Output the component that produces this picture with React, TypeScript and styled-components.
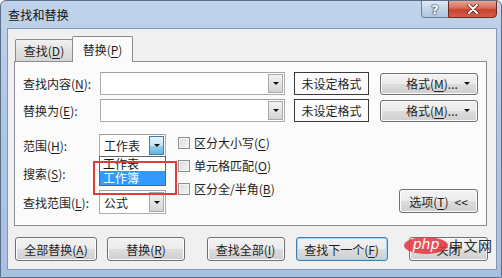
import React from 'react';
import styled, { createGlobalStyle, css } from 'styled-components';

const GlobalStyle = createGlobalStyle`
  html, body {
    margin: 0;
    padding: 0;
    background: #fff;
  }
  body {
    font-family: "Noto Sans CJK SC", "Noto Sans", sans-serif;
    font-size: 12px;
    color: #1e1e1e;
  }
`;

const Window = styled.div`
  position: relative;
  width: 502px;
  height: 278px;
  display: flex;
  flex-direction: column;
  box-sizing: border-box;
  background: linear-gradient(180deg, #c0d3ea 0%, #b0c7e3 40%, #a9c1e0 100%);
  border: 1px solid #5b6f8c;
  border-radius: 6px 6px 0 0;
  overflow: hidden;
`;

const TitleBar = styled.div`
  height: 27px;
  display: flex;
  align-items: flex-start;
  justify-content: space-between;
  flex-shrink: 0;
`;

const Title = styled.div`
  margin: 5px 0 0 7px;
  font-size: 12px;
  color: #111;
  letter-spacing: 0.2px;
`;

const Caption = styled.div`
  display: flex;
  margin-right: 4px;
  margin-top: -1px;
`;

const HelpButton = styled.div`
  width: 27px;
  height: 18px;
  box-sizing: border-box;
  border: 1px solid #6b7f9c;
  border-right: none;
  border-radius: 0 0 0 4px;
  background: linear-gradient(180deg, #dfe9f5 0%, #c3d4e9 50%, #afc4df 100%);
  display: flex;
  align-items: center;
  justify-content: center;
  color: #fff;
  font-family: "DejaVu Sans", sans-serif;
  font-weight: bold;
  font-size: 13px;
  text-shadow: 0 0 1px #2a3a55, 0 0 1px #2a3a55, 0 0 2px #2a3a55;
`;

const CloseButton = styled.div`
  width: 49px;
  height: 18px;
  box-sizing: border-box;
  border: 1px solid #6e2a22;
  border-radius: 0 0 4px 0;
  background: linear-gradient(180deg, #e6a594 0%, #d86a55 45%, #c7432e 55%, #d0604a 100%);
  display: flex;
  align-items: center;
  justify-content: center;
`;

const Client = styled.div`
  flex: 1;
  margin: 0 4px 7px 6px;
  background: #f0f0f0;
  border: 1px solid #8397b4;
  display: flex;
  flex-direction: column;
  padding: 7px 8px 8px 6px;
`;

const TabStrip = styled.div`
  display: flex;
  align-items: flex-end;
  padding-left: 1px;
  position: relative;
  z-index: 2;
`;

const Tab = styled.div<{ active?: boolean }>`
  box-sizing: border-box;
  border: 1px solid #898c95;
  border-radius: 2px 2px 0 0;
  display: flex;
  align-items: center;
  justify-content: center;
  ${({ active }) =>
    active
      ? css`
          width: 61px;
          height: 26px;
          background: #fbfbfb;
          border-bottom: none;
          margin-bottom: -1px;
          margin-left: -1px;
        `
      : css`
          width: 58px;
          height: 22px;
          background: linear-gradient(180deg, #f2f2f2 0%, #e2e2e2 50%, #d6d6d6 100%);
          border-bottom: none;
        `}
`;

const Mn = styled.span`
  text-decoration: underline;
  text-underline-offset: 2px;
`;

const Panel = styled.div`
  box-sizing: border-box;
  width: 473px;
  height: 165px;
  border: 1px solid #898c95;
  background: #fbfbfb;
  padding: 10px 8px 0 8px;
  display: flex;
  flex-direction: column;
`;

const FieldRow = styled.div`
  display: flex;
  align-items: center;
  height: 23px;
  & + & {
    margin-top: 4px;
  }
`;

const Label = styled.div<{ w: number }>`
  width: ${({ w }) => w}px;
  flex-shrink: 0;
  white-space: nowrap;
`;

const Combo = styled.div<{ w: number; h?: number }>`
  position: relative;
  box-sizing: border-box;
  width: ${({ w }) => w}px;
  height: ${({ h }) => h ?? 23}px;
  border: 1px solid #abadb3;
  border-top-color: #9ea1aa;
  background: #fff;
  display: flex;
  align-items: center;
  padding-left: 4px;
`;

const ComboText = styled.div`
  flex: 1;
  font-size: 12px;
`;

const Arrow = styled.div<{ hot?: boolean }>`
  width: 15px;
  align-self: stretch;
  margin: 1px;
  box-sizing: border-box;
  border: 1px solid ${({ hot }) => (hot ? '#3c7fb1' : '#a9a9a9')};
  background: ${({ hot }) =>
    hot
      ? 'linear-gradient(180deg, #e5f4fc 0%, #c4e5f6 50%, #98d1ef 51%, #68b3db 100%)'
      : 'linear-gradient(180deg, #f2f2f2 0%, #e4e4e4 50%, #d4d4d4 100%)'};
  display: flex;
  align-items: center;
  justify-content: center;
  &::after {
    content: '';
    border-left: 3px solid transparent;
    border-right: 3px solid transparent;
    border-top: 3px solid #111;
  }
`;

const FormatBox = styled.div`
  box-sizing: border-box;
  width: 75px;
  height: 23px;
  margin-left: 9px;
  border: 1px solid #3a3a3a;
  background: #fbfbfb;
  display: flex;
  align-items: center;
  justify-content: center;
`;

const WinButton = styled.div<{ w: number; focused?: boolean }>`
  box-sizing: border-box;
  width: ${({ w }) => w}px;
  height: 24px;
  border: 1px solid ${({ focused }) => (focused ? '#3c7fb1' : '#707070')};
  border-radius: 3px;
  background: linear-gradient(180deg, #f2f2f2 0%, #ebebeb 50%, #dddddd 51%, #cfcfcf 100%);
  box-shadow: inset 0 0 0 1px ${({ focused }) => (focused ? '#9fd5f5' : '#fcfcfc')};
  display: flex;
  align-items: center;
  justify-content: center;
  white-space: nowrap;
  flex-shrink: 0;
`;

const MenuButton = styled(WinButton)`
  margin-left: 11px;
  justify-content: flex-start;
  padding-left: 25px;
  height: 22px;
  gap: 6px;
  &::after {
    content: '';
    margin-left: auto;
    margin-right: 8px;
    border-left: 3px solid transparent;
    border-right: 3px solid transparent;
    border-top: 3px solid #111;
  }
`;

const Lower = styled.div`
  display: flex;
  margin-top: 12px;
`;

const LeftCol = styled.div`
  display: flex;
  flex-direction: column;
  gap: 5px;
`;

const SelectRow = styled.div`
  position: relative;
  display: flex;
  align-items: center;
`;

const CheckCol = styled.div`
  display: flex;
  flex-direction: column;
  margin: -3px 0 0 12px;
`;

const CheckRow = styled.div`
  display: flex;
  align-items: center;
  height: 23px;
  gap: 4px;
  white-space: nowrap;
`;

const Box = styled.div`
  width: 12px;
  height: 12px;
  box-sizing: border-box;
  border: 1px solid #8e8f8f;
  background: linear-gradient(135deg, #dcdcdc 0%, #f4f4f4 100%);
  box-shadow: inset 0 0 0 1px #f4f4f4;
`;

const OptionsButton = styled(WinButton)`
  margin-left: auto;
  align-self: flex-end;
  margin-bottom: 1px;
  gap: 6px;
`;

const DropList = styled.div`
  position: absolute;
  top: 22px;
  left: 76px;
  width: 67px;
  box-sizing: border-box;
  border: 1px solid #646464;
  background: #fff;
  z-index: 3;
`;

const DropItem = styled.div<{ selected?: boolean }>`
  height: 14px;
  line-height: 14px;
  overflow: hidden;
  padding-left: 3px;
  font-size: 12px;
  background: ${({ selected }) => (selected ? '#3399ff' : '#fff')};
  color: ${({ selected }) => (selected ? '#fff' : '#111')};
`;

const Highlight = styled.div`
  position: absolute;
  top: 27px;
  left: 70px;
  width: 84px;
  height: 34px;
  box-sizing: border-box;
  border: 2px solid #e23b3f;
  z-index: 4;
  pointer-events: none;
`;

const ButtonBar = styled.div`
  display: flex;
  justify-content: space-between;
  margin-top: 11px;
  padding-left: 1px;
  width: 473px;
`;

const ButtonGroup = styled.div<{ gap: number }>`
  display: flex;
  gap: ${({ gap }) => gap}px;
`;

const Watermark = styled.div`
  position: absolute;
  left: 403px;
  top: 234px;
  display: flex;
  align-items: center;
  z-index: 5;
`;

const PhpBadge = styled.div`
  width: 44px;
  height: 17px;
  border-radius: 50%;
  background: rgba(226, 58, 68, 0.88);
  color: #fff;
  font-family: "DejaVu Sans", sans-serif;
  font-style: italic;
  font-size: 14px;
  line-height: 15px;
  text-align: center;
`;

const WatermarkText = styled.div`
  font-size: 14px;
  color: #2a2a2a;
  margin-left: 1px;
  letter-spacing: 0.5px;
`;

const App = () => (
  <>
    <GlobalStyle />
    <Window>
      <TitleBar>
        <Title>查找和替换</Title>
        <Caption>
          <HelpButton>?</HelpButton>
          <CloseButton>
            <svg width="12" height="10" viewBox="0 0 12 10">
              <path d="M2 1 L10 9 M10 1 L2 9" stroke="#5a1a12" strokeWidth="3.4" strokeLinecap="round" />
              <path d="M2 1 L10 9 M10 1 L2 9" stroke="#fff" strokeWidth="2" strokeLinecap="round" />
            </svg>
          </CloseButton>
        </Caption>
      </TitleBar>

      <Client>
        <TabStrip>
          <Tab>
            查找(<Mn>D</Mn>)
          </Tab>
          <Tab active>
            替换(<Mn>P</Mn>)
          </Tab>
        </TabStrip>

        <Panel>
          <FieldRow>
            <Label w={77}>
              查找内容(<Mn>N</Mn>):
            </Label>
            <Combo w={185}>
              <ComboText />
              <Arrow />
            </Combo>
            <FormatBox>未设定格式</FormatBox>
            <MenuButton w={98}>
              <span>
                格式(<Mn>M</Mn>)...
              </span>
            </MenuButton>
          </FieldRow>
          <FieldRow>
            <Label w={77}>
              替换为(<Mn>E</Mn>):
            </Label>
            <Combo w={185}>
              <ComboText />
              <Arrow />
            </Combo>
            <FormatBox>未设定格式</FormatBox>
            <MenuButton w={98}>
              <span>
                格式(<Mn>M</Mn>)...
              </span>
            </MenuButton>
          </FieldRow>

          <Lower>
            <LeftCol>
              <SelectRow>
                <Label w={76}>
                  范围(<Mn>H</Mn>):
                </Label>
                <Combo w={67}>
                  <ComboText>工作表</ComboText>
                  <Arrow hot />
                </Combo>
                <DropList>
                  <DropItem>工作表</DropItem>
                  <DropItem selected>工作簿</DropItem>
                </DropList>
                <Highlight />
              </SelectRow>
              <SelectRow>
                <Label w={76}>
                  搜索(<Mn>S</Mn>):
                </Label>
                <Combo w={67}>
                  <ComboText />
                  <Arrow />
                </Combo>
              </SelectRow>
              <SelectRow>
                <Label w={76}>
                  查找范围(<Mn>L</Mn>):
                </Label>
                <Combo w={67} h={24}>
                  <ComboText>公式</ComboText>
                  <Arrow />
                </Combo>
              </SelectRow>
            </LeftCol>

            <CheckCol>
              <CheckRow>
                <Box />
                <span>
                  区分大小写(<Mn>C</Mn>)
                </span>
              </CheckRow>
              <CheckRow>
                <Box />
                <span>
                  单元格匹配(<Mn>O</Mn>)
                </span>
              </CheckRow>
              <CheckRow>
                <Box />
                <span>
                  区分全/半角(<Mn>B</Mn>)
                </span>
              </CheckRow>
            </CheckCol>

            <OptionsButton w={79}>
              <span>
                选项(<Mn>T</Mn>)
              </span>
              <span>&lt;&lt;</span>
            </OptionsButton>
          </Lower>
        </Panel>

        <ButtonBar>
          <ButtonGroup gap={10}>
            <WinButton w={82}>
              全部替换(<Mn>A</Mn>)
            </WinButton>
            <WinButton w={78}>
              替换(<Mn>R</Mn>)
            </WinButton>
          </ButtonGroup>
          <ButtonGroup gap={11}>
            <WinButton w={78}>
              查找全部(<Mn>I</Mn>)
            </WinButton>
            <WinButton w={92} focused>
              查找下一个(<Mn>F</Mn>)
            </WinButton>
          </ButtonGroup>
          <WinButton w={79}>关闭</WinButton>
        </ButtonBar>
      </Client>

      <Watermark>
        <PhpBadge>php</PhpBadge>
        <WatermarkText>中文网</WatermarkText>
      </Watermark>
    </Window>
  </>
);

export default App;
